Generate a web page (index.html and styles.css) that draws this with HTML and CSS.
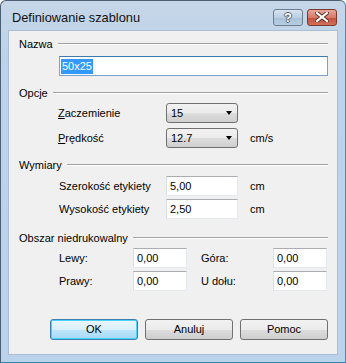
FILE: index.html
```html
<!DOCTYPE html>
<html lang="pl">
<head>
    <meta charset="UTF-8">
    <title>Definiowanie szablonu</title>
    <link rel="stylesheet" href="styles.css">
</head>
<body>
    <div class="window">
        <div class="titlebar">
            <span class="title">Definiowanie szablonu</span>
            <div class="title-btn help"><span>?</span></div>
            <div class="title-btn close">
                <svg width="14" height="10" viewBox="0 0 14 10">
                    <path d="M2 1 L12 9 M12 1 L2 9" stroke="#5a2a20" stroke-width="4" stroke-linecap="square"/>
                    <path d="M2 1 L12 9 M12 1 L2 9" stroke="#fff" stroke-width="2.2" stroke-linecap="square"/>
                </svg>
            </div>
        </div>
        <div class="client">
            <div class="group-head"><span>Nazwa</span><div class="line"></div></div>
            <div class="field name-field"><span class="selected">50x25</span></div>

            <div class="group-head gap"><span>Opcje</span><div class="line"></div></div>
            <div class="row first">
                <span class="label opt-label"><u>Z</u>aczemienie</span>
                <div class="combo"><span>15</span><i class="arrow"></i></div>
            </div>
            <div class="row second">
                <span class="label opt-label"><u>P</u>rędkość</span>
                <div class="combo"><span>12.7</span><i class="arrow"></i></div>
                <span class="unit">cm/s</span>
            </div>

            <div class="group-head gap"><span>Wymiary</span><div class="line"></div></div>
            <div class="row first dim">
                <span class="label dim-label">Szerokość etykiety</span>
                <div class="field small">5,00</div>
                <span class="unit">cm</span>
            </div>
            <div class="row third">
                <span class="label dim-label">Wysokość etykiety</span>
                <div class="field small">2,50</div>
                <span class="unit">cm</span>
            </div>

            <div class="group-head gap-wide"><span>Obszar niedrukowalny</span><div class="line"></div></div>
            <div class="row third">
                <span class="label margin-label">Lewy:</span>
                <div class="field tiny">0,00</div>
                <span class="label margin-label2">Góra:</span>
                <div class="field tiny">0,00</div>
            </div>
            <div class="row third">
                <span class="label margin-label">Prawy:</span>
                <div class="field tiny">0,00</div>
                <span class="label margin-label2">U dołu:</span>
                <div class="field tiny">0,00</div>
            </div>

            <div class="buttons">
                <div class="btn default">OK</div>
                <div class="btn">Anuluj</div>
                <div class="btn">Pomoc</div>
            </div>
        </div>
    </div>
</body>
</html>
```

FILE: styles.css
```css
body {
    margin: 0;
    font-family: "Liberation Sans", Arial, sans-serif;
    font-size: 11px;
    color: #000;
}
.window {
    width: 346px;
    height: 363px;
    box-sizing: border-box;
    border: 1px solid #4b5f72;
    border-right-color: #3f8fbf;
    border-bottom-color: #2f86b0;
    border-radius: 6px 6px 0 0;
    background: linear-gradient(#c6d6e7, #bcd3eb 60px, #bad2ea);
    display: flex;
    flex-direction: column;
}
.titlebar {
    height: 29px;
    box-sizing: border-box;
    padding: 3px 8px 0 11px;
    display: flex;
    align-items: center;
}
.title {
    flex: 1;
    font-size: 12.8px;
    color: #111;
}
.title-btn {
    width: 30px;
    height: 17px;
    box-sizing: border-box;
    border: 1px solid #6b7d8e;
    border-radius: 3px;
    display: flex;
    justify-content: center;
    align-items: center;
}
.help {
    margin-right: 4px;
    background: linear-gradient(#d7e3ef, #bccfe2 50%, #a9c0d8 51%, #b7cde2);
}
.help span {
    font-weight: bold;
    font-size: 13px;
    color: #fff;
    text-shadow: 1px 0 #4d6175, -1px 0 #4d6175, 0 1px #4d6175, 0 -1px #4d6175;
}
.close {
    border-color: #7a3a30;
    background: linear-gradient(#e8a89b, #d77a67 50%, #c4503b 51%, #d0705c);
}
.client {
    flex: 1;
    margin: 0 7px 7px;
    border: 1px solid #aabdd2;
    background: #f0f0f0;
    padding: 6px 9px 0 10px;
    display: flex;
    flex-direction: column;
}
.group-head {
    height: 14px;
    display: flex;
    align-items: center;
    gap: 5px;
}
.group-head .line {
    flex: 1;
    border-top: 1px solid #a0a0a0;
    border-bottom: 1px solid #fff;
}
.gap {
    margin-top: 10px;
}
.gap-wide {
    margin-top: 12px;
}
.field {
    height: 20px;
    box-sizing: border-box;
    background: #fff;
    border: 1px solid #e3e9ef;
    border-top-color: #abadb3;
    border-left-color: #dbdfe6;
    padding-left: 3px;
    line-height: 18px;
}
.name-field {
    margin: 5px 0 0 40px;
    border-color: #7da2ce;
    border-top-color: #3d7bad;
    padding-left: 1px;
}
.selected {
    background: #3399ff;
    color: #fff;
    padding: 1px 1px 2px;
}
.row {
    height: 20px;
    display: flex;
    align-items: center;
}
.first {
    margin-top: 3px;
}
.dim {
    margin-top: 4px;
}
.second {
    margin-top: 5px;
}
.third {
    margin-top: 3px;
}
.opt-label {
    margin-left: 39px;
    width: 108px;
}
.dim-label {
    margin-left: 40px;
    width: 107px;
}
.margin-label {
    margin-left: 40px;
    width: 74px;
}
.margin-label2 {
    margin-left: 14px;
    width: 72px;
}
.combo {
    width: 72px;
    height: 20px;
    box-sizing: border-box;
    border: 1px solid #707070;
    border-radius: 3px;
    background: linear-gradient(#f2f2f2, #ebebeb 50%, #dddddd 51%, #cfcfcf);
    padding: 0 0 0 4px;
    display: flex;
    align-items: center;
}
.combo span {
    flex: 1;
}
.arrow {
    width: 0;
    height: 0;
    margin-right: 5px;
    border-left: 3.5px solid transparent;
    border-right: 3.5px solid transparent;
    border-top: 4px solid #000;
}
.small {
    width: 72px;
}
.tiny {
    width: 54px;
}
.unit {
    margin-left: 12px;
}
.buttons {
    margin-top: 28px;
    display: flex;
    justify-content: flex-end;
    gap: 7px;
}
.btn {
    width: 88px;
    height: 21px;
    box-sizing: border-box;
    border: 1px solid #707070;
    border-radius: 3px;
    background: linear-gradient(#f2f2f2, #ebebeb 50%, #dddddd 51%, #cfcfcf);
    text-align: center;
    line-height: 19px;
}
.btn.default {
    border-color: #3c7fb1;
    background: linear-gradient(#eaf6fd, #d9f0fc 50%, #bee6fd 51%, #a7d9f5);
    box-shadow: inset 0 0 0 1px #48d2fc;
}
```
